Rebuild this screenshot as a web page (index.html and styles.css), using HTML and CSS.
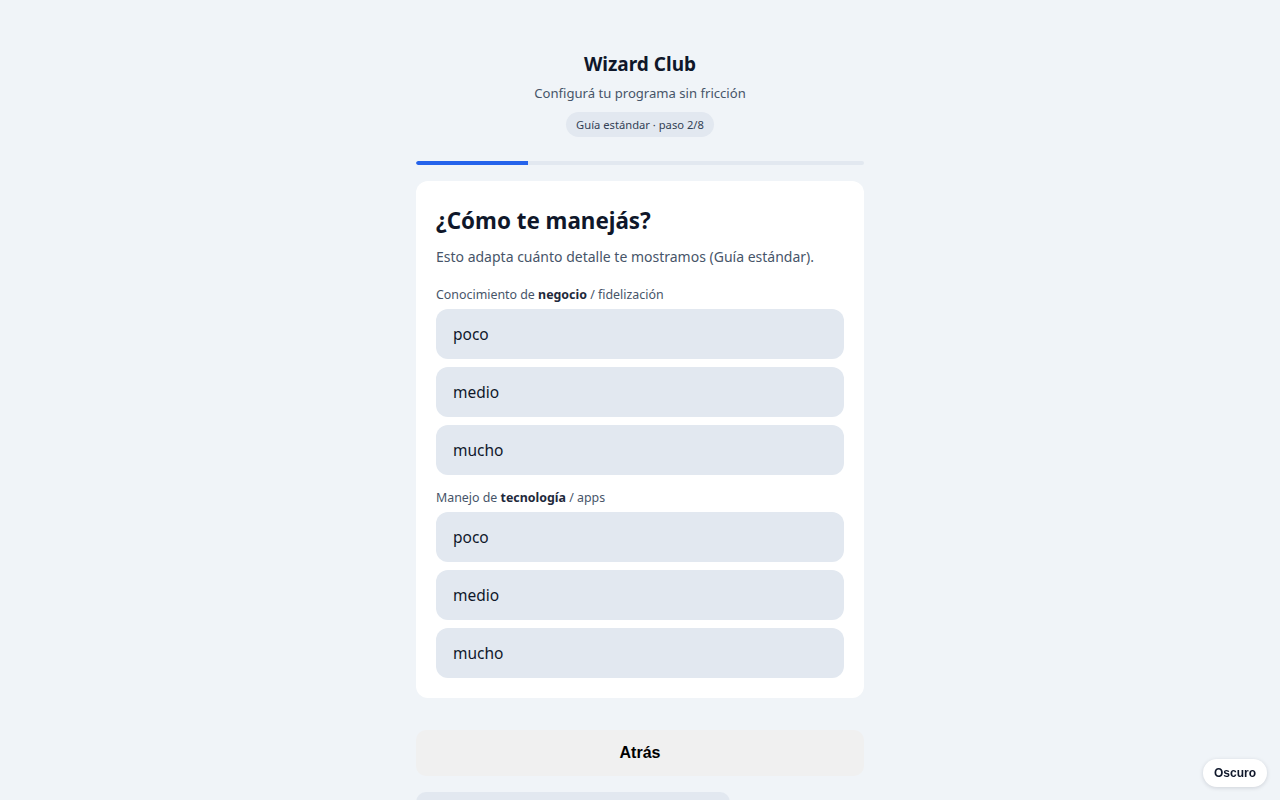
FILE: index.html
```
<!DOCTYPE html>
<html lang="es">
<head>
<meta charset="utf-8">
<title>Wizard Club</title>
<link rel="stylesheet" href="styles.css">
</head>
<body>
<div class="wrap">
  <header class="head">
    <h1 class="brand">Wizard Club</h1>
    <p class="sub">Configurá tu programa sin fricción</p>
    <span class="badge">Guía estándar · paso 2/8</span>
  </header>
  <div class="progress"><div class="bar" style="width:25%"></div></div>
  <section class="card">
    <h2 class="title">¿Cómo te manejás?</h2>
    <p class="desc">Esto adapta cuánto detalle te mostramos (Guía estándar).</p>
    <div class="group">
      <div class="label">Conocimiento de <b>negocio</b> / fidelización</div>
      <div class="opt">poco</div>
      <div class="opt">medio</div>
      <div class="opt">mucho</div>
    </div>
    <div class="group">
      <div class="label">Manejo de <b>tecnología</b> / apps</div>
      <div class="opt">poco</div>
      <div class="opt">medio</div>
      <div class="opt">mucho</div>
    </div>
  </section>
  <button class="back">Atrás</button>
  <div class="next"></div>
</div>
<button class="theme">Oscuro</button>
</body>
</html>
```
FILE: styles.css
```
* { box-sizing: border-box; }
html, body { margin: 0; padding: 0; }
body {
  background: #f0f4f8;
  font-family: "Noto Sans", "Open Sans", sans-serif;
  color: #0f172a;
}
.wrap {
  width: 448px;
  margin: 0 auto;
  padding-top: 50px;
  display: flex;
  flex-direction: column;
}
.head {
  display: flex;
  flex-direction: column;
  align-items: center;
}
.brand {
  margin: 0;
  font-size: 19px;
  line-height: 28px;
  font-weight: 700;
  color: #0f172a;
}
.sub {
  margin: 5px 0 0;
  font-size: 13.1px;
  line-height: 20px;
  color: #475569;
}
.badge {
  margin-top: 9px;
  height: 25px;
  line-height: 25px;
  padding: 0 10px;
  border-radius: 999px;
  background: #e2e8f0;
  font-size: 11.2px;
  color: #334155;
}
.progress {
  margin-top: 24px;
  height: 4px;
  border-radius: 4px;
  background: #e2e8f0;
  overflow: hidden;
}
.bar {
  height: 100%;
  background: #2563eb;
  border-radius: 4px 0 0 4px;
}
.card {
  margin-top: 16px;
  background: #fff;
  border-radius: 12px;
  padding: 20px;
}
.title {
  margin: 0;
  font-size: 22.4px;
  line-height: 40px;
  font-weight: 700;
  color: #0f172a;
}
.desc {
  margin: 4px 0 0;
  font-size: 14px;
  line-height: 24px;
  color: #475569;
}
.group { margin-top: 17px; display: flex; flex-direction: column; gap: 8px; }
.group + .group { margin-top: 14px; }
.label {
  font-size: 12.4px;
  line-height: 18px;
  color: #475569;
  margin-bottom: -3px;
}
.label b { color: #1e293b; font-weight: 700; }
.opt {
  height: 50px;
  display: flex;
  align-items: center;
  padding: 0 17px;
  background: #e2e8f0;
  border-radius: 12px;
  font-size: 15.5px;
  color: #0f172a;
}
.back {
  margin-top: 32px;
  height: 46px;
  border: none;
  border-radius: 10px;
  background: #f0f0f0;
  font-family: "Liberation Sans", Arial, sans-serif;
  font-weight: 700;
  font-size: 16px;
  color: #000;
}
.next {
  margin-top: 16px;
  width: 314px;
  height: 46px;
  border-radius: 10px;
  background: #e2e8f0;
}
.theme {
  position: fixed;
  right: 13px;
  bottom: 13px;
  height: 28px;
  padding: 0 11px;
  border: none;
  border-radius: 999px;
  background: #fff;
  box-shadow: 0 1px 4px rgba(15, 23, 42, 0.15);
  font-family: "Liberation Sans", Arial, sans-serif;
  font-weight: 700;
  font-size: 12px;
  color: #0f172a;
}
```
